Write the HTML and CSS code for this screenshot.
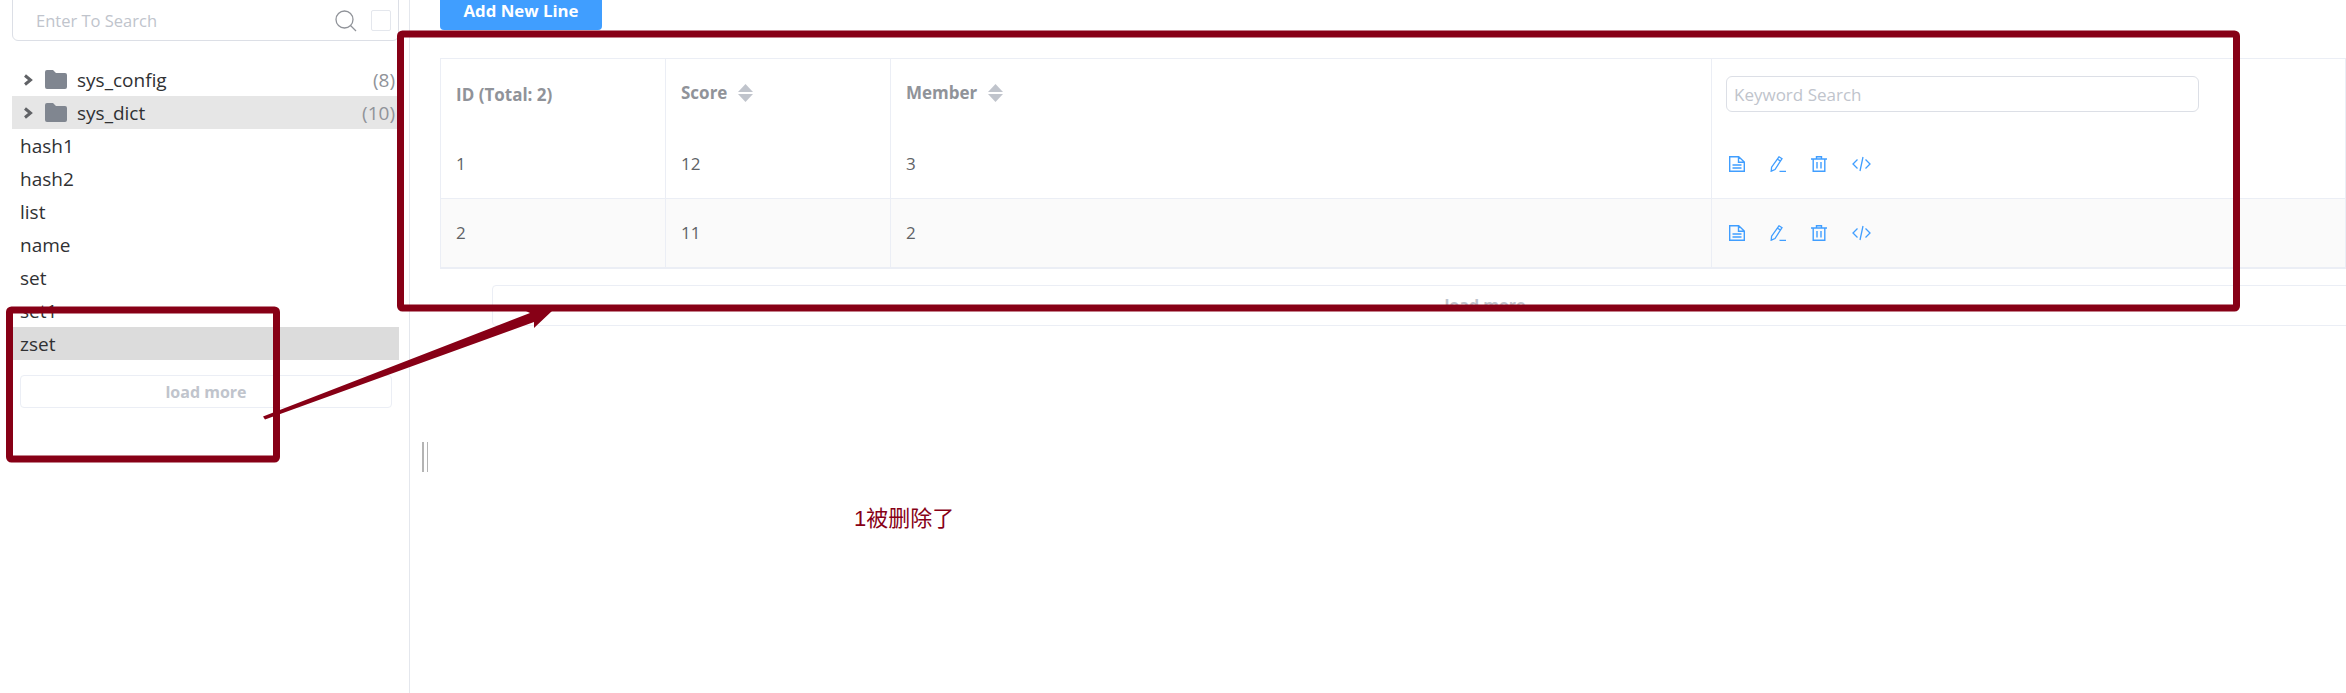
FILE: index.html
```html
<!DOCTYPE html>
<html lang="zh">
<head>
  <meta charset="UTF-8">
  <meta name="viewport" content="width=device-width, initial-scale=1.0">
  <title>Redis keys</title>
  <link rel="stylesheet" href="styles.css">
</head>
<body>
<svg class="defs" width="0" height="0">
  <symbol id="i-doc" viewBox="0 0 16 16">
    <path d="M.7.7h9L15.300 6v9.300H.7z M9.500.7v5.500h5.800 M3.500 9h9 M3.500 12h9" fill="none" stroke="currentColor" stroke-width="1.400"/>
  </symbol>
  <symbol id="i-edit" viewBox="0 0 16 16">
    <path d="M9 .8l3 1.800-7 10.900-3.800 1.700.4-4zM7.500 3.200l3 1.900 M9.500 15.300h6.500" fill="none" stroke="currentColor" stroke-width="1.300"/>
  </symbol>
  <symbol id="i-trash" viewBox="0 0 16 16">
    <path d="M0 3h16 M5.500 3V.8h5V3 M2.200 3v12.300h11.600V3 M6 6v6.500 M10 6v6.500" fill="none" stroke="currentColor" stroke-width="1.400"/>
  </symbol>
  <symbol id="i-code" viewBox="0 0 19 16">
    <path d="M5.500 3.500L1 8l4.500 4.500 M13.500 3.500L18 8l-4.500 4.500 M11 1L8 15" fill="none" stroke="currentColor" stroke-width="1.300"/>
  </symbol>
  <symbol id="i-sort" viewBox="0 0 15 18">
    <path d="M7.500 0L15 8H0z M0 10h15l-7.500 8z" fill="currentColor"/>
  </symbol>
  <symbol id="i-arrow" viewBox="0 0 10 12">
    <path d="M2 1.500L7.500 6 2 10.500" fill="none" stroke="currentColor" stroke-width="3"/>
  </symbol>
  <symbol id="i-folder" viewBox="0 0 22 19">
    <path d="M2 0h6l3 3h9a2 2 0 0 1 2 2v12a2 2 0 0 1-2 2H2a2 2 0 0 1-2-2V2a2 2 0 0 1 2-2z" fill="currentColor"/>
  </symbol>
</svg>

<div class="page">
  <aside class="sidebar">
    <div class="search">
      <span class="search-text">Enter To Search</span>
      <svg class="search-icon" width="22" height="22" viewBox="0 0 22 22">
        <circle cx="9.500" cy="9.500" r="8.500" fill="none" stroke="currentColor" stroke-width="1.300"/>
        <path d="M15.500 15.500L21 21" fill="none" stroke="currentColor" stroke-width="1.300"/>
      </svg>
      <span class="search-check"></span>
    </div>

    <ul class="keys">
      <li class="key folder">
        <svg class="chevron"><use href="#i-arrow"/></svg>
        <svg class="folder-icon"><use href="#i-folder"/></svg>
        <span class="key-name">sys_config</span>
        <span class="key-count">(8)</span>
      </li>
      <li class="key folder hovered">
        <svg class="chevron"><use href="#i-arrow"/></svg>
        <svg class="folder-icon"><use href="#i-folder"/></svg>
        <span class="key-name">sys_dict</span>
        <span class="key-count">(10)</span>
      </li>
      <li class="key">hash1</li>
      <li class="key">hash2</li>
      <li class="key">list</li>
      <li class="key">name</li>
      <li class="key">set</li>
      <li class="key">set1</li>
      <li class="key selected">zset</li>
    </ul>
    <button class="load-more side-more">load more</button>
  </aside>

  <main class="content">
    <button class="add-line">Add New Line</button>

    <table class="rows">
      <colgroup>
        <col class="col-id">
        <col class="col-score">
        <col class="col-member">
        <col class="col-ops">
      </colgroup>
      <thead>
        <tr>
          <th>ID (Total: 2)</th>
          <th class="sortable">Score <svg class="sort"><use href="#i-sort"/></svg></th>
          <th class="sortable">Member <svg class="sort"><use href="#i-sort"/></svg></th>
          <th class="search-cell"><input class="keyword" type="text" placeholder="Keyword Search"></th>
        </tr>
      </thead>
      <tbody>
        <tr>
          <td>1</td>
          <td>12</td>
          <td>3</td>
          <td>
            <div class="ops">
              <svg class="op"><use href="#i-doc"/></svg>
              <svg class="op"><use href="#i-edit"/></svg>
              <svg class="op"><use href="#i-trash"/></svg>
              <svg class="op code"><use href="#i-code"/></svg>
            </div>
          </td>
        </tr>
        <tr class="striped">
          <td>2</td>
          <td>11</td>
          <td>2</td>
          <td>
            <div class="ops">
              <svg class="op"><use href="#i-doc"/></svg>
              <svg class="op"><use href="#i-edit"/></svg>
              <svg class="op"><use href="#i-trash"/></svg>
              <svg class="op code"><use href="#i-code"/></svg>
            </div>
          </td>
        </tr>
      </tbody>
    </table>

    <button class="load-more main-more">load more</button>
    <div class="resize-handle"></div>
  </main>
</div>

<!-- annotations drawn on top of the screenshot -->
<svg class="marks" width="2346" height="693" viewBox="0 0 2346 693">
  <rect x="400.500" y="34" width="1836" height="274" rx="2" fill="none" stroke="#870016" stroke-width="7"/>
  <rect x="9.500" y="310" width="267" height="149" rx="2" fill="none" stroke="#870016" stroke-width="7"/>
  <polygon points="263,416.500 530,313 526,311 552,311 534,328 534,322 265,419.500" fill="#870016"/>
</svg>
<div class="note">1被删除了</div>
</body>
</html>
```

FILE: styles.css
```css
html, body {
  margin: 0;
  height: 100%;
  overflow: hidden;
  background: white;
}
body {
  font-family: "Open Sans", "Noto Sans", sans-serif;
  color: #303133;
}
.defs {
  display: block;
}
.page {
  display: flex;
  width: 2346px;
  height: 693px;
  overflow: hidden;
}

/* left list */
.sidebar {
  box-sizing: border-box;
  flex: none;
  width: 410px;
  height: 693px;
  padding-left: 12px;
  border-right: 1px solid #e4e7ed;
}
.search {
  display: flex;
  align-items: center;
  box-sizing: border-box;
  width: 387px;
  height: 52px;
  margin-top: -11px;
  padding: 11px 7px 0 23px;
  border: 1px solid #dcdfe6;
  border-radius: 6px;
}
.search-text {
  flex: 1;
  font-size: 16.5px;
  color: #c0c4cc;
}
.search-icon {
  margin-right: 14px;
  color: #909399;
}
.search-check {
  box-sizing: border-box;
  width: 20px;
  height: 21px;
  border: 1px solid #e4e7ed;
  border-radius: 2px;
}
.keys {
  list-style: none;
  margin: 22px 0 0;
  padding: 0;
  width: 387px;
  font-size: 19px;
}
.key {
  display: flex;
  align-items: center;
  box-sizing: border-box;
  height: 33px;
  padding-left: 8px;
}
.key.folder {
  width: 385px;
  padding-right: 2px;
}
.key.hovered {
  background-color: #e6e6e6;
}
.key.selected {
  background-color: #dcdcdc;
}
.chevron {
  width: 10px;
  height: 12px;
  margin-left: 3px;
  color: #606266;
}
.folder-icon {
  width: 22px;
  height: 19px;
  margin: 0 10px 0 12px;
  color: #808690;
}
.key-name {
  flex: 1;
}
.key-count {
  color: #909399;
}
.load-more {
  display: block;
  box-sizing: border-box;
  padding: 0;
  border: 1px solid #ebeef5;
  border-radius: 4px;
  background: white;
  font-family: inherit;
  font-size: 16px;
  font-weight: bold;
  color: #c0c4cc;
}
.side-more {
  width: 372px;
  height: 33px;
  margin: 15px 0 0 8px;
}

/* right side */
.content {
  flex: none;
  width: 1936px;
  padding-left: 30px;
}
.add-line {
  display: block;
  box-sizing: border-box;
  width: 162px;
  height: 40px;
  margin-top: -10px;
  padding: 0;
  border: none;
  border-radius: 4px;
  background-color: #409eff;
  font-family: inherit;
  font-size: 16.800px;
  font-weight: bold;
  color: white;
}
.rows {
  table-layout: fixed;
  width: 1906px;
  margin-top: 28px;
  border-collapse: collapse;
  border-top: 1px solid #ebeef5;
  border-left: 1px solid #ebeef5;
  border-bottom: 2px solid #ebeef5;
  font-size: 17px;
}
.col-id, .col-score {
  width: 225px;
}
.col-member {
  width: 821px;
}
th, td {
  box-sizing: border-box;
  padding: 0 15px;
  border-right: 1px solid #ebeef5;
  text-align: left;
}
th {
  height: 71px;
  font-size: 17px;
  color: #909399;
}
td {
  height: 69px;
  color: #606266;
}
.striped td {
  background-color: #fafafa;
  border-top: 1px solid #ebeef5;
}
.sort {
  width: 15px;
  height: 18px;
  margin-left: 6px;
  vertical-align: -3px;
  color: #c0c4cc;
}
.sortable {
  padding-bottom: 3px;
}
.search-cell {
  padding-left: 14px;
}
.keyword {
  display: block;
  box-sizing: border-box;
  width: 473px;
  height: 36px;
  padding: 0 7px;
  border: 1px solid #dcdfe6;
  border-radius: 6px;
  font-family: inherit;
  font-size: 17px;
}
.keyword::placeholder {
  color: #c0c4cc;
}
.ops {
  display: flex;
  gap: 25px;
  align-items: center;
  padding-left: 2px;
  color: #409eff;
}
.op {
  width: 16px;
  height: 16px;
}
.op.code {
  width: 19px;
}
.main-more {
  width: 1986px;
  height: 41px;
  margin: 16px 0 0 52px;
}
.resize-handle {
  box-sizing: border-box;
  width: 6px;
  height: 30px;
  margin: 116px 0 0 -18px;
  border-left: 2px solid #b4b4b4;
  border-right: 1px solid #b4b4b4;
}

/* annotations */
.marks {
  position: absolute;
  left: 0;
  top: 0;
  pointer-events: none;
}
.note {
  position: absolute;
  left: 854px;
  top: 503px;
  font-family: "Liberation Sans", "Noto Sans CJK SC", sans-serif;
  font-size: 22px;
  line-height: 32px;
  color: #870016;
}
```
